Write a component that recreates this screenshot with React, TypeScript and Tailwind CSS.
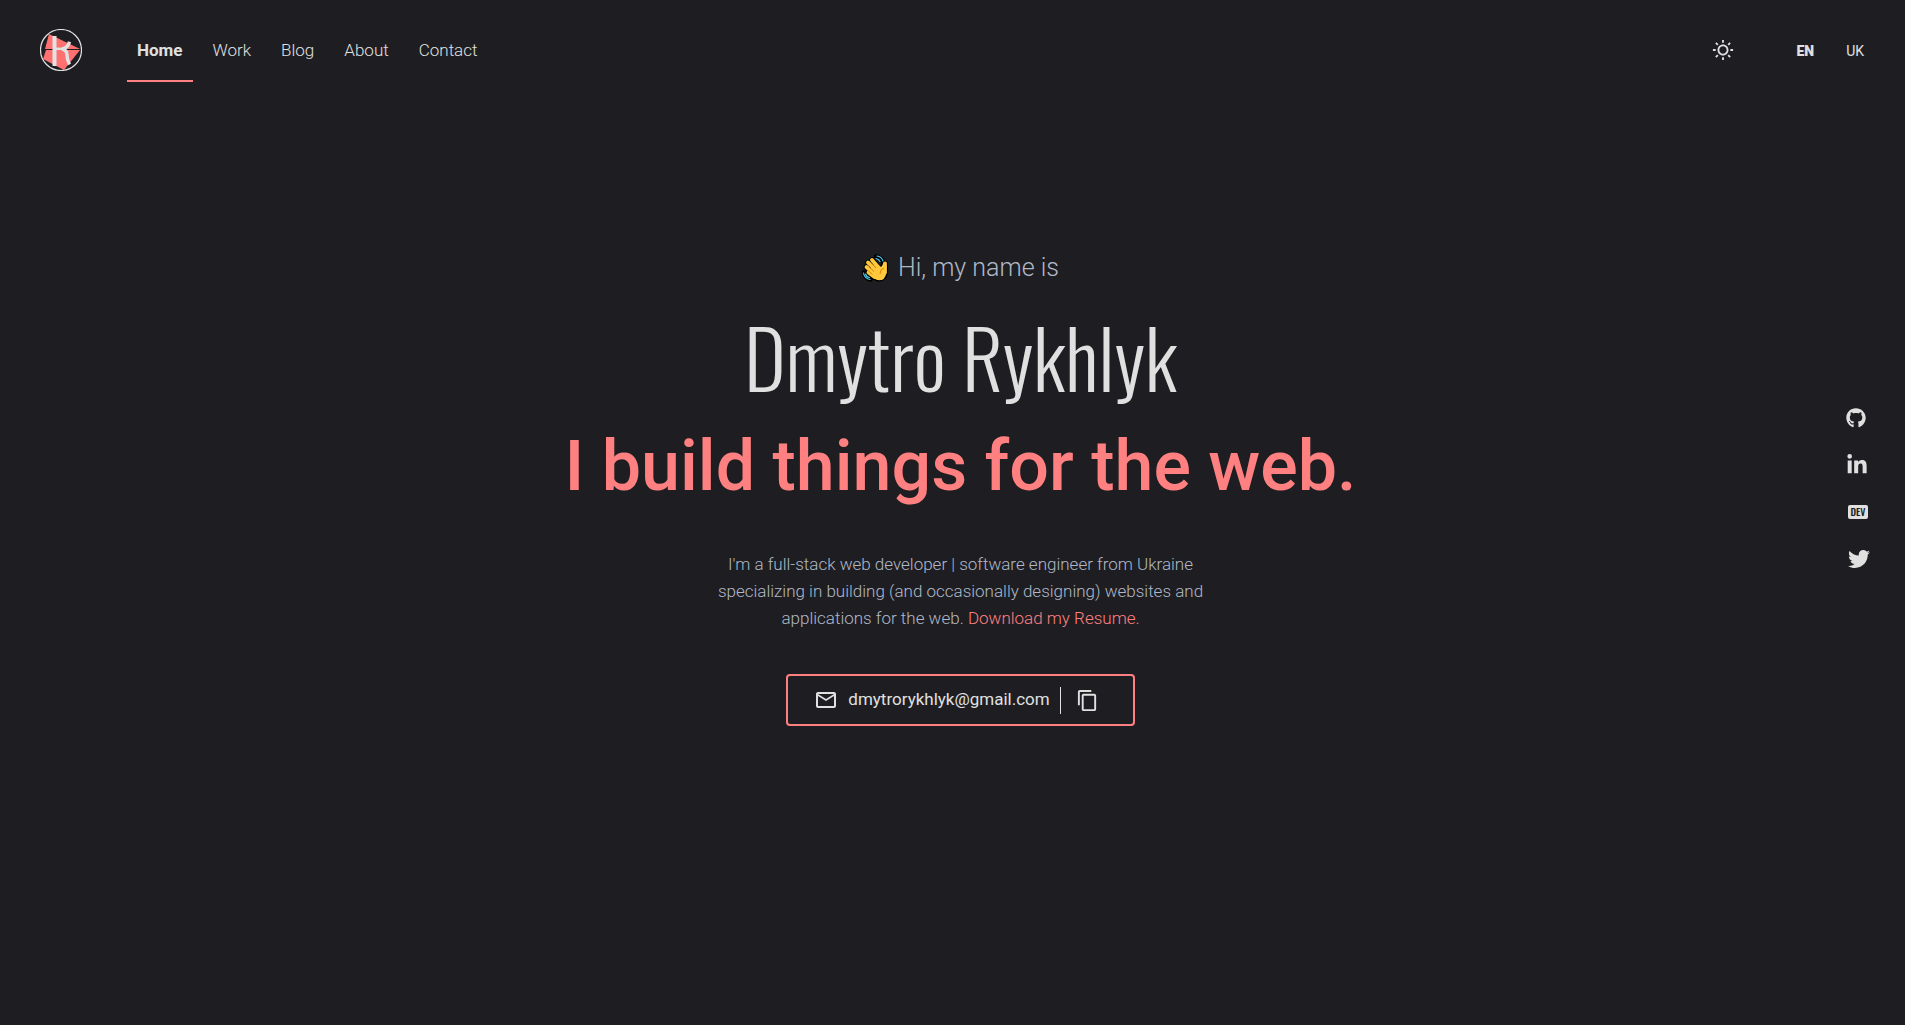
import { FaGithub, FaLinkedinIn, FaTwitter } from "react-icons/fa";
import { MdContentCopy, MdMailOutline } from "react-icons/md";
import { RiSunLine } from "react-icons/ri";

const navItems = ["Work", "Blog", "About", "Contact"];

function Logo() {
  return (
    <svg viewBox="0 0 42 42" className="size-[42px]" aria-hidden="true">
      <polygon points="9,5 40,20 5,20" fill="#ff7070" />
      <polygon points="6,21 40,21 24,41 3,30" fill="#ff7070" />
      <circle cx="21" cy="21" r="20.500" fill="none" stroke="#e2e2e2" strokeWidth="1.200" />
      <path d="M5 20.500h35" stroke="#1e1e22" strokeWidth="1" />
      <g fill="none" stroke="#e2e2e2">
        <path d="M14.500 7v30" strokeWidth="4" />
        <path d="M16 19.800h8" strokeWidth="2.400" />
        <path d="M22 19.800q5.500 0 7.500-7M22 20q5 1 5 6q0 5 2.500 9.500" strokeWidth="3.400" />
      </g>
    </svg>
  );
}

function WavingHand() {
  return (
    <svg viewBox="0 0 26 28" className="h-7 w-[26px]" aria-label="Waving hand" role="img">
      <g fill="none" stroke="#000" strokeWidth="4.500" strokeLinecap="round">
        <path d="M14 2.500q5 0.500 7 5M2 18.500q1 5.500 6.500 7" />
      </g>
      <g fill="none" strokeLinecap="round" stroke="#000" strokeWidth="5.500">
        <path d="M10 6l7 8M6 8.500l9 9M4.500 13l8 8M6.500 18.500l5 4.500M23 9.500v9" />
      </g>
      <path
        d="M9 13L19 12L21 8.500Q23.500 6.500 25 9V19Q24 27 17 27Q13 27 8 21Z"
        fill="#ffc83d"
        stroke="#000"
        strokeWidth="1.500"
      />
      <g fill="none" strokeLinecap="round" stroke="#ffc83d" strokeWidth="3.800">
        <path d="M10 6l8 9M6 8.500l10 9M4.500 13l9 8M6.500 18.500l6 4.500M23 9.500v9" />
      </g>
      <path d="M9 13L19 13L23 12V19Q22 26 17 26Q13 26 9 21Z" fill="#ffc83d" />
      <path
        d="M8.500 8.500l5.500 5.500M6.500 12.500l5.500 5M6.500 17l4 3.500M22 14q-4 1-4 6"
        fill="none"
        stroke="#d67d00"
        strokeWidth="0.900"
      />
      <g fill="none" stroke="#50c8e8" strokeWidth="1.200" strokeLinecap="round">
        <path d="M15 2q4.500 0.500 6 5M14 4.500q3 0.500 4 3M1.500 19q1 5.500 6.500 6.500M3.500 20q1 3 4 3.500" />
      </g>
    </svg>
  );
}

function DevIcon() {
  return (
    <svg viewBox="0 0 20 14" className="h-3.5 w-5" aria-hidden="true">
      <rect width="20" height="14" rx="2" fill="currentColor" />
      <text
        x="10"
        y="11"
        textAnchor="middle"
        fill="#1e1e22"
        fontFamily="Oswald, 'Liberation Sans Narrow', sans-serif"
        fontSize="10"
        fontWeight="500"
      >
        DEV
      </text>
    </svg>
  );
}

export default function App() {
  return (
    <div className="relative flex min-h-screen flex-col bg-[#1e1e22] font-['Roboto',sans-serif] text-[#e0e0e0]">
      <header className="flex h-[100px] items-center justify-between pr-[41px] pl-10">
        <div className="flex items-center gap-[45px]">
          <a href="#home" aria-label="Home page">
            <Logo />
          </a>
          <nav className="flex gap-2.5 text-[17px] leading-6">
            <a
              href="#home"
              aria-current="page"
              className="border-b-2 border-[#ff8080] px-2.5 pt-5 pb-[18px] font-bold"
            >
              Home
            </a>
            {navItems.map((item) => (
              <a
                key={item}
                href={`#${item.toLowerCase()}`}
                className="border-b-2 border-transparent px-2.5 pt-5 pb-[18px] font-light"
              >
                {item}
              </a>
            ))}
          </nav>
        </div>
        <div className="flex items-center text-sm">
          <button type="button" aria-label="Toggle theme" className="mr-[62px]">
            <RiSunLine className="size-[22px]" />
          </button>
          <button type="button" className="mr-8 pt-0.5 font-black">
            EN
          </button>
          <button type="button" className="pt-0.5">
            UK
          </button>
        </div>
      </header>

      <main className="flex flex-1 flex-col items-center pt-[150px] pl-4 text-center">
        <p className="flex items-center gap-2.5 text-[25px] leading-9 font-light text-[#b0b8c8]">
          <WavingHand />
          Hi, my name is
        </p>
        <h1 className="mt-2.5 font-['Oswald',sans-serif] text-[80px] leading-[120px] font-light">
          Dmytro Rykhlyk
        </h1>
        <h2 className="mt-2 text-[70px] leading-[84px] font-medium text-[#ff8080]">
          I build things for the web.
        </h2>
        <p className="mt-[43px] max-w-[500px] text-[17px] leading-[27px] font-light text-[#b0b8c8]">
          I'm a full-stack web developer | software engineer from Ukraine specializing in building
          (and occasionally designing) websites and applications for the web.{" "}
          <a href="#resume" className="text-[#ff8080]">
            Download my Resume.
          </a>
        </p>
        <div className="mt-[42px] flex h-[52px] items-center rounded border-2 border-[#ff8080] pr-[34px] pl-[26px]">
          <a
            href="mailto:dmytrorykhlyk@gmail.com"
            className="flex items-center gap-2.5 text-[17px] font-normal"
          >
            <MdMailOutline className="size-6" />
            dmytrorykhlyk@gmail.com
          </a>
          <button
            type="button"
            aria-label="Copy email"
            className="ml-2.5 flex h-[27px] items-center border-l border-[#e0e0e0] pl-[15px]"
          >
            <MdContentCopy className="size-[23px]" />
          </button>
        </div>
      </main>

      <aside className="absolute top-[400px] right-[35px] flex flex-col gap-[11px]">
        <a href="#github" aria-label="GitHub" className="flex h-9 items-center">
          <FaGithub className="size-5" />
        </a>
        <a href="#linkedin" aria-label="LinkedIn" className="flex h-9 items-center">
          <FaLinkedinIn className="size-[22px]" />
        </a>
        <a href="#dev" aria-label="DEV Community" className="flex h-9 items-center pl-0.5">
          <DevIcon />
        </a>
        <a href="#twitter" aria-label="Twitter" className="flex h-9 items-center pl-0.5">
          <FaTwitter className="size-[22px]" />
        </a>
      </aside>
    </div>
  );
}
